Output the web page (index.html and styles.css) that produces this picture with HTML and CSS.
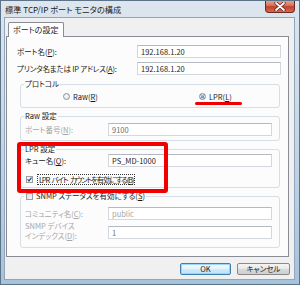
FILE: index.html
```html
<!DOCTYPE html>
<html lang="ja">
<head>
    <meta charset="UTF-8">
    <title>標準 TCP/IP ポート モニタの構成</title>
    <link rel="stylesheet" href="styles.css">
</head>
<body>
    <div class="window">
        <div class="titlebar">
            <span class="title">標準 TCP/IP ポート モニタの構成</span>
            <div class="close">
                <svg width="12" height="9" viewBox="0 0 12 9">
                    <path d="M2 1 L10 8 M10 1 L2 8" stroke="#5a1a1a" stroke-width="3.2" stroke-linecap="round"/>
                    <path d="M2 1 L10 8 M10 1 L2 8" stroke="#fff" stroke-width="1.8" stroke-linecap="round"/>
                </svg>
            </div>
        </div>

        <div class="client">
            <div class="tabs">
                <div class="tab">ポートの設定</div>
            </div>

            <div class="panel">
                <div class="row row-first">
                    <span class="lbl">ポート名(<u>P</u>):</span>
                    <div class="input">192.168.1.20</div>
                </div>
                <div class="row row-next">
                    <span class="lbl tight">プリンタ名または IP アドレス(<u>A</u>):</span>
                    <div class="input">192.168.1.20</div>
                </div>

                <fieldset class="group group-proto">
                    <legend>プロトコル</legend>
                    <div class="radios">
                        <span class="opt opt-raw"><span class="radio"></span><span>Raw(<u>R</u>)</span></span>
                        <span class="opt"><span class="radio on"></span><span>LPR(<u>L</u>)</span></span>
                    </div>
                </fieldset>

                <fieldset class="group group-raw">
                    <legend>Raw 設定</legend>
                    <div class="row row-in">
                        <span class="lbl lbl-sub off">ポート番号(<u>N</u>):</span>
                        <div class="input dim">9100</div>
                    </div>
                </fieldset>

                <fieldset class="group group-lpr">
                    <legend>LPR 設定</legend>
                    <div class="row">
                        <span class="lbl lbl-sub">キュー名(<u>Q</u>):</span>
                        <div class="input">PS_MD-1000</div>
                    </div>
                    <div class="check-row">
                        <span class="check on"></span>
                        <span class="focus">LPR バイト カウントを有効にする(<u>B</u>)</span>
                    </div>
                </fieldset>

                <fieldset class="group group-snmp">
                    <legend><span class="check"></span><span>SNMP ステータスを有効にする(<u>S</u>)</span></legend>
                    <div class="row row-snmp">
                        <span class="lbl lbl-sub off">コミュニティ名(<u>C</u>):</span>
                        <div class="input off-text">public</div>
                    </div>
                    <div class="row row-snmp">
                        <span class="lbl lbl-sub off lbl-two">SNMP デバイス<br>インデックス(<u>D</u>):</span>
                        <div class="input dim">1</div>
                    </div>
                </fieldset>
            </div>

            <div class="buttons">
                <button class="btn btn-default">OK</button>
                <button class="btn">キャンセル</button>
            </div>
        </div>

        <!-- red marks drawn over the dialog -->
        <div class="mark-box"></div>
        <div class="mark-line"></div>
    </div>
</body>
</html>
```

FILE: styles.css
```css
body {
    margin: 0;
    font-family: "Noto Sans CJK JP", "Noto Sans", sans-serif;
    font-size: 7.5px;
    font-feature-settings: "palt";
    color: #1a1a1a;
}

.window {
    position: relative;
    width: 300px;
    height: 285px;
    box-sizing: border-box;
    background: linear-gradient(to bottom, #dde6ee 0, #d0dde9 30%, #b9cfe2 70%, #a6c2da 100%);
    border: 1px solid #5d7388;
    overflow: hidden;
}

.titlebar {
    display: flex;
    justify-content: space-between;
    align-items: flex-start;
    height: 17px;
}

.title {
    padding: 3px 0 0 4px;
    line-height: 10px;
    font-size: 8.2px;
    color: #222;
}

.close {
    width: 30px;
    height: 13px;
    margin-right: 4px;
    margin-top: -1px;
    box-sizing: border-box;
    border: 1px solid #6b2a24;
    border-top: none;
    border-radius: 0 0 4px 4px;
    background: linear-gradient(to bottom, #e9a99a 0, #d6755f 45%, #c2432b 55%, #d66a4e 100%);
    display: flex;
    align-items: center;
    justify-content: center;
}

.client {
    margin: 0 5px 0 4px;
    height: 261px;
    background: #f0f0f0;
    box-shadow: 0 0 0 1px #8fa6bc;
    overflow: hidden;
}

.tabs {
    padding: 4px 0 0 3px;
    display: flex;
}

.tab {
    position: relative;
    z-index: 1;
    height: 15px;
    margin-bottom: -1px;
    padding: 0 5px 0 4px;
    box-sizing: border-box;
    background: #fff;
    border: 1px solid #898c95;
    border-bottom: none;
    border-radius: 2px 2px 0 0;
    line-height: 13px;
    font-size: 8px;
}

.panel {
    height: 221px;
    width: 283px;
    margin-left: 1px;
    box-sizing: border-box;
    padding: 0 7px 0 10px;
    background: #fcfcfc;
    border: 1px solid #898c95;
}

.row {
    display: flex;
    align-items: center;
    height: 13px;
}

.row-first {
    margin-top: 8px;
}

.row-next {
    margin-top: 4px;
}

.lbl {
    width: 120px;
    flex-shrink: 0;
    white-space: nowrap;
}

.tight {
    letter-spacing: -0.2px;
}

.lbl-sub {
    width: 83px;
}

.lbl-two {
    line-height: 10px;
    margin-bottom: 4px;
}

.off {
    color: #a6a6a6;
}

.input {
    flex: 1;
    height: 13px;
    box-sizing: border-box;
    padding-left: 3px;
    line-height: 11px;
    background: #fff;
    border: 1px solid #d2d8de;
    border-top-color: #b4b9bf;
    white-space: nowrap;
}

.dim {
    color: #6e6e6e;
}

.off-text {
    color: #a6a6a6;
}

.group {
    margin: 3px 1px 0 3px;
    padding: 0 7px 4px 4px;
    border: 1px solid #d5dfe5;
    border-radius: 3px;
    min-width: 0;
}

.group legend {
    padding: 0 1px;
    margin-left: -1px;
    height: 10px;
    line-height: 10px;
    display: flex;
    align-items: center;
}

.group-proto {
    margin-top: 4px;
    padding-bottom: 6px;
}

.radios {
    display: flex;
    align-items: center;
    height: 10px;
    margin-top: 2px;
}

.opt {
    display: flex;
    align-items: center;
    gap: 3px;
}

.opt-raw {
    width: 136px;
    margin-left: 38px;
}

.radio {
    width: 7px;
    height: 7px;
    box-sizing: border-box;
    border-radius: 50%;
    border: 1px solid #8a949e;
    background: radial-gradient(circle at 40% 40%, #fafafa 0, #d9dde1 100%);
}

.radio.on {
    background: radial-gradient(circle at 45% 40%, #9fd0f5 0, #2c78bf 45%, #1d4f86 100%);
    box-shadow: inset 0 0 0 1px #e8eef4;
}

.row-in {
    margin-top: 2px;
}

.group-lpr {
    padding-bottom: 3px;
}

.check-row {
    display: flex;
    align-items: center;
    gap: 2px;
    height: 10px;
    margin-top: 7px;
}

.check {
    width: 7px;
    height: 7px;
    box-sizing: border-box;
    flex-shrink: 0;
    border: 1px solid #9a9fa5;
    background: linear-gradient(to bottom right, #dcdfe2, #f6f6f6);
    margin: 0 3px 0 1px;
}

.check.on {
    background: #f4f4f4 url("data:image/svg+xml,%3Csvg xmlns='http://www.w3.org/2000/svg' width='5' height='5' viewBox='0 0 5 5'%3E%3Cpath d='M0.6 2.4 L2 3.9 L4.5 0.6' fill='none' stroke='%232a3f6e' stroke-width='1.2'/%3E%3C/svg%3E") center / 5px 5px no-repeat;
}

.focus {
    outline: 1px dotted #333;
    outline-offset: 0;
    padding: 0 1px;
    line-height: 9px;
    letter-spacing: -1.2px;
    word-spacing: 2px;
    white-space: nowrap;
}

.group-snmp {
    padding-bottom: 8px;
}

.group-snmp legend {
    padding-left: 1px;
}

.row-snmp {
    margin-top: 6px;
}

.buttons {
    display: flex;
    justify-content: flex-end;
    gap: 6px;
    margin-top: 6px;
    padding-right: 4px;
}

.btn {
    width: 53px;
    height: 12px;
    padding: 0;
    box-sizing: border-box;
    font: inherit;
    line-height: 10px;
    color: #1a1a1a;
    border: 1px solid #8a8a8a;
    border-radius: 2px;
    background: linear-gradient(to bottom, #f4f4f4 0, #e9e9e9 48%, #d9d9d9 52%, #cfcfcf 100%);
}

.btn-default {
    width: 51px;
    border-color: #3c7fb1;
    background: linear-gradient(to bottom, #f0f9fe 0, #e3f3fc 48%, #cfeafb 52%, #bde2f7 100%);
    box-shadow: inset 0 0 0 1px #9fd6f7;
}

.mark-box {
    position: absolute;
    left: 16px;
    top: 141px;
    width: 151px;
    height: 51px;
    box-sizing: border-box;
    border: 4px solid #f20000;
    border-radius: 3px;
}

.mark-line {
    position: absolute;
    left: 194px;
    top: 101px;
    width: 47px;
    height: 3px;
    border-radius: 2px;
    background: #f20000;
}
```
